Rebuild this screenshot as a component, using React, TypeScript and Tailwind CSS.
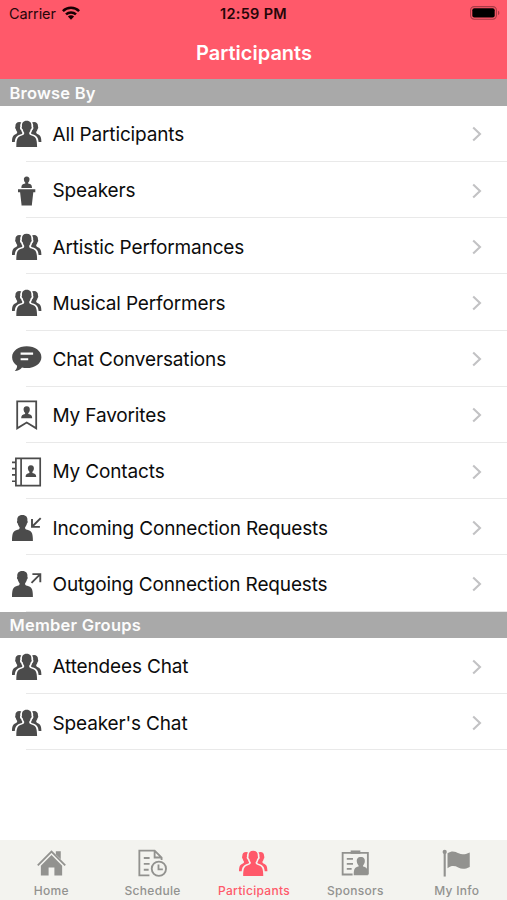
import type { ReactNode } from "react";

type IconProps = { className?: string };

const GroupIcon = ({ className }: IconProps) => (
  <svg viewBox="0 0 30 30" className={className} fill="currentColor">
    <path d="M7.4 3C8.4 3 9 3.2 9.3 3.6C8.3 5 8 6.2 8.3 7.6C7.6 9 8 10.4 9.2 11.2C9.5 12.4 9.9 13.2 10.4 13.9C10.3 14.8 9.8 15 8.2 15.5C4.8 16.7 3.2 18.4 2.8 23H0C.1 18.4.8 16.6 3 15.5C4.6 14.8 5.3 14.3 5.2 13.1C4.4 12.2 4 11.1 3.8 10C3 9.2 3 8.2 3.4 7.4C3.3 4.6 4.8 3 7.4 3Z" />
    <path d="M22 3C21 3 20.4 3.2 20.1 3.6C21.1 5 21.4 6.2 21.1 7.6C21.8 9 21.4 10.4 20.2 11.2C19.9 12.4 19.5 13.2 19 13.9C19.1 14.8 19.6 15 21.2 15.5C24.6 16.7 26.2 18.4 26.6 23H29.4C29.3 18.4 28.6 16.6 26.4 15.5C24.8 14.8 24.1 14.3 24.2 13.1C25 12.2 25.4 11.1 25.6 10C26.4 9.2 26.4 8.2 26 7.4C26.1 4.6 24.6 3 22 3Z" />
    <path d="M14.7 1.8C18.2 1.8 19.7 4 19.4 7.4C20 8.3 19.7 9.6 18.7 10.3C18.4 11.8 17.9 12.9 17.2 13.8C17.1 15.4 17.6 15.8 19.6 16.5C23.4 17.8 25.1 19 25.1 28H4.3C4.3 19 6 17.8 9.8 16.5C11.8 15.8 12.3 15.4 12.2 13.8C11.5 12.9 11 11.8 10.7 10.3C9.7 9.6 9.4 8.3 10 7.4C9.7 4 11.2 1.8 14.7 1.8Z" />
  </svg>
);

const SpeakerIcon = ({ className }: IconProps) => (
  <svg viewBox="0 0 30 30" className={className} fill="currentColor">
    <path d="M14.7.4C16.7.4 17.7 1.7 17.5 3.5C17.4 5 16.8 6 16.1 6.7V7.4C18.8 8 20 8.5 20 12H9.4C9.4 8.5 10.6 8 13.3 7.4V6.7C12.6 6 12 5 11.9 3.5C11.7 1.7 12.7.4 14.7.4Z" />
    <path d="M6 13.3H23.3V16.2H21.3L19.9 28.5V29.5H9.5V28.5L8.1 16.2H6Z" />
  </svg>
);

const ChatIcon = ({ className }: IconProps) => (
  <svg viewBox="0 0 30 30" className={className}>
    <path
      fill="currentColor"
      d="M14.7 2.3C22.9 2.3 29.4 6.9 29.4 13.2S22.9 24.1 14.7 24.1C13 24.1 11.5 23.9 10 23.5C8.2 25.7 6 26.8 2.8 27C4.2 25.4 5.2 23.9 5.1 21.8C2 19.7.1 16.7.1 13.2C.1 6.9 6.6 2.3 14.7 2.3Z"
    />
    <path d="M8.6 9.6H21.1M8.6 15.3H16.2" stroke="#fff" strokeWidth="2.1" />
  </svg>
);

const FavoriteIcon = ({ className }: IconProps) => (
  <svg viewBox="0 0 30 30" className={className}>
    <path d="M5.2 1.3H24.2V28.3L14.7 22.5L5.2 28.3Z" fill="none" stroke="currentColor" strokeWidth="1.8" />
    <path
      fill="currentColor"
      d="M14.7 6.3C17.1 6.3 18 7.8 17.8 10C17.6 11.4 17.1 12.4 16.3 13V14.1C19 14.7 20.2 15.5 20.2 18.3H9.2C9.2 15.5 10.4 14.7 13.1 14.1V13C12.3 12.4 11.8 11.4 11.6 10C11.4 7.8 12.3 6.3 14.7 6.3Z"
    />
  </svg>
);

const ContactsIcon = ({ className }: IconProps) => (
  <svg viewBox="0 0 30 30" className={className}>
    <g fill="none" stroke="currentColor" strokeWidth="1.7">
      <path d="M3.9 1.3H28.2V28.7H3.9ZM9.1 1.3V28.7" />
      <path d="M0 5.4H4M0 11.6H4M0 17.9H4M0 24.2H4" strokeWidth="1.6" />
    </g>
    <path
      fill="currentColor"
      d="M18.9 8.2C21.2 8.2 22.1 9.7 21.9 11.8C21.7 13.2 21.2 14.2 20.4 14.8V15.9C23 16.5 24.2 17.2 24.2 20H13.6C13.6 17.2 14.8 16.5 17.4 15.9V14.8C16.6 14.2 16.1 13.2 15.9 11.8C15.7 9.7 16.6 8.2 18.9 8.2Z"
    />
  </svg>
);

const PersonShape = () => (
  <path
    fill="currentColor"
    d="M10.3 2C14.2 2 15.8 4.2 15.4 7.8C16 8.8 15.7 10 14.9 10.5C14.6 12.2 14 13.2 13.1 14.2C13 15.7 13.4 16.2 15.2 16.8C19.3 18 21 19.2 20.9 28H0C0 19.2 1.6 18 5.5 16.8C7.3 16.2 7.7 15.7 7.6 14.2C6.7 13.2 6.1 12.2 5.8 10.5C4.9 10 4.7 8.8 5.3 7.8C4.9 4.2 6.5 2 10.3 2Z"
  />
);

const IncomingIcon = ({ className }: IconProps) => (
  <svg viewBox="0 0 30 30" className={className}>
    <PersonShape />
    <path d="M28.7 5.1L20.3 13.5M20 5.9V13.9H27.9" fill="none" stroke="currentColor" strokeWidth="1.9" />
  </svg>
);

const OutgoingIcon = ({ className }: IconProps) => (
  <svg viewBox="0 0 30 30" className={className}>
    <PersonShape />
    <path d="M19.5 13.9L28 5.4M20.4 5.1H28.3V13.2" fill="none" stroke="currentColor" strokeWidth="1.9" />
  </svg>
);

const HomeIcon = ({ className }: IconProps) => (
  <svg viewBox="0 0 30 30" className={className}>
    <path d="M.8 17L15 2.7L29.2 17" fill="none" stroke="currentColor" strokeWidth="1.9" />
    <path d="M19.5 2.2H24.6V10.7L19.5 5.6Z" fill="currentColor" />
    <path d="M15 6.2L26 17.2V27.5H18V19.2H12V27.5H4V17.2Z" fill="currentColor" />
  </svg>
);

const ScheduleIcon = ({ className }: IconProps) => (
  <svg viewBox="0 0 30 30" className={className} fill="none" stroke="currentColor" strokeWidth="1.9">
    <path d="M11.8 27.3H1.4V1.6H17.2L24.4 8.8V11.5M17.2 2V8.8H24" />
    <path d="M6 9.3H12M6 15.4H12M6 21.5H11" />
    <circle cx="21.6" cy="20.4" r="7.4" />
    <path d="M21.2 16V21.1H25.7" />
  </svg>
);

const SponsorsIcon = ({ className }: IconProps) => (
  <svg viewBox="0 0 30 30" className={className}>
    <path d="M12 26.4H1.7V4H27.8V26.4" fill="none" stroke="currentColor" strokeWidth="1.9" />
    <path d="M10 1.5H20V5H10Z" fill="currentColor" />
    <path d="M6 10.2H12.4M6 15.4H12.4M6 20.5H11" stroke="currentColor" strokeWidth="1.9" />
    <path
      fill="currentColor"
      d="M20.5 8.2C23.8 8.2 25 10.3 24.6 13.3C24.4 15 23.7 16.1 22.8 17V18.2C26.4 19.1 27.9 20 27.8 27.2H13.2C13.2 20 14.6 19.1 18.2 18.2V17C17.3 16.1 16.6 15 16.4 13.3C16 10.3 17.2 8.2 20.5 8.2Z"
    />
  </svg>
);

const FlagIcon = ({ className }: IconProps) => (
  <svg viewBox="0 0 30 30" className={className} fill="currentColor">
    <circle cx="2.8" cy="3" r="2.2" />
    <path d="M1.7 3H3.9V28.5H1.7Z" />
    <path d="M5.7 4.4C10.7 1 14 2.8 17.2 4.5C20.7 6.2 24 5.7 28.7 3.5V18.5C24 20.9 20.4 21 16.8 19.1C13 17.2 9.7 17 5.7 19.8Z" />
  </svg>
);

const rows = [
  { label: "All Participants", icon: GroupIcon },
  { label: "Speakers", icon: SpeakerIcon },
  { label: "Artistic Performances", icon: GroupIcon },
  { label: "Musical Performers", icon: GroupIcon },
  { label: "Chat Conversations", icon: ChatIcon },
  { label: "My Favorites", icon: FavoriteIcon },
  { label: "My Contacts", icon: ContactsIcon },
  { label: "Incoming Connection Requests", icon: IncomingIcon },
  { label: "Outgoing Connection Requests", icon: OutgoingIcon },
];

const groups = [
  { label: "Attendees Chat", icon: GroupIcon },
  { label: "Speaker's Chat", icon: GroupIcon },
];

const tabs = [
  { label: "Home", icon: HomeIcon },
  { label: "Schedule", icon: ScheduleIcon },
  { label: "Participants", icon: GroupIcon, active: true },
  { label: "Sponsors", icon: SponsorsIcon },
  { label: "My Info", icon: FlagIcon },
];

const SectionHeader = ({ children }: { children: ReactNode }) => (
  <h2 className="flex h-[26.5px] items-center bg-[#a9a9a9] pl-[9.5px] pt-[1.5px] text-[16.5px] font-semibold tracking-[0.22px] text-[#fcfcfc]">
    {children}
  </h2>
);

const List = ({ items }: { items: typeof rows }) => (
  <ul>
    {items.map(({ label, icon: Icon }) => (
      <li key={label} className="flex h-[56.2px] flex-col">
        <div className="flex flex-1 items-center pl-3 pr-[25px] pt-[2px]">
          <Icon className="h-[30px] w-[30px] shrink-0 text-[#4b4b4b]" />
          <span className="flex-1 whitespace-nowrap pl-[10.5px] pt-[2px] text-[19px] tracking-[-0.15px] text-[#0c0c0c]">
            {label}
          </span>
          <svg viewBox="0 0 10 16" className="h-4 w-[10px]" fill="none" stroke="#c2c2c4" strokeWidth="2.1">
            <path d="M1.2 1.5L8 8L1.2 14.5" />
          </svg>
        </div>
        <div className="ml-[26px] h-px bg-[#e9e9e9]" />
      </li>
    ))}
  </ul>
);

export default function App() {
  return (
    <div className="flex h-[900px] w-[507px] flex-col overflow-hidden bg-white font-['Inter',sans-serif]">
      <header className="h-[79.4px] shrink-0 bg-[#ff596a]">
        <div className="grid h-[27px] grid-cols-3 items-center pl-[9px] pr-[7px] text-[14.5px] text-[#260609]">
          <div className="flex items-center gap-[6px]">
            <span className="tracking-[-0.1px]">Carrier</span>
            <svg viewBox="0 0 18 14" className="-mt-0.5 h-[14px] w-[18px]" fill="none" stroke="#170003" strokeWidth="2.5">
              <path d="M.9 5.1C5.3.7 12.7.7 17.1 5.1M4 8.4C6.8 5.7 11.2 5.7 14 8.4" />
              <path d="M9 13.7L5.9 10.5C7.6 8.9 10.4 8.9 12.1 10.5Z" fill="#170003" stroke="none" />
            </svg>
          </div>
          <span className="-ml-[2px] whitespace-nowrap text-center font-semibold tracking-[0.3px]">12:59 PM</span>
          <svg viewBox="0 0 30 14" className="-mt-px h-[14px] w-[30px] justify-self-end">
            <rect x=".6" y=".6" width="25.8" height="12.6" rx="3.6" fill="none" stroke="#a83a46" strokeWidth="1.1" />
            <rect x="2.3" y="2.3" width="22.4" height="9.2" rx="2" fill="#000" />
            <path d="M28 4.7C29.8 5.3 29.8 8.5 28 9.1Z" fill="#a83a46" />
          </svg>
        </div>
        <h1 className="flex h-[51px] items-center justify-center pl-px text-[20px] font-semibold text-white">
          Participants
        </h1>
      </header>
      <main className="flex-1">
        <SectionHeader>Browse By</SectionHeader>
        <List items={rows} />
        <SectionHeader>Member Groups</SectionHeader>
        <List items={groups} />
      </main>
      <nav className="grid h-[60px] shrink-0 grid-cols-5 bg-[#f3f3ef]">
        {tabs.map(({ label, icon: Icon, active }) => (
          <div
            key={label}
            className={`flex flex-col items-center pl-px pt-[9px] ${active ? "text-[#ff596a]" : "text-[#92928f]"}`}
          >
            <Icon className="h-[29px] w-[29px]" />
            <span className="mt-1 text-[12px] font-medium leading-[18px] tracking-[0.3px]">{label}</span>
          </div>
        ))}
      </nav>
    </div>
  );
}
